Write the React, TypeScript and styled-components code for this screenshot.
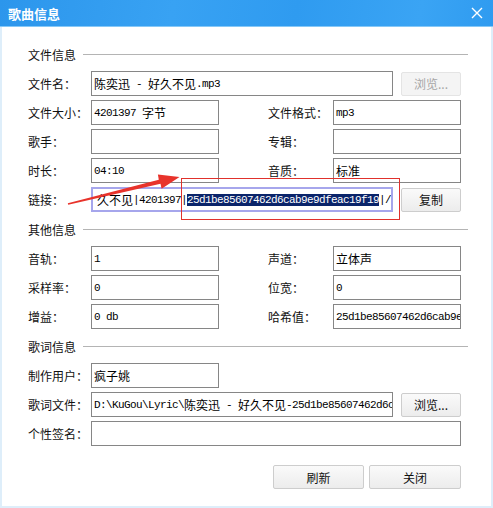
import React from 'react';
import styled, { createGlobalStyle } from 'styled-components';

const GlobalStyle = createGlobalStyle`
  html, body { margin: 0; padding: 0; background: #fff; }
  body { font-family: "Noto Sans CJK SC", "Noto Sans", sans-serif; font-size: 12px; }
`;

const HAN_RUNS = /[\u2e80-\uffff]+|[^\u2e80-\uffff]+/g;
const IS_HAN = /[\u2e80-\uffff]/;

// SimSun style text: han glyphs 12px wide, ascii 6px wide
const mixed = (text: string) =>
    (text.match(HAN_RUNS) || []).map((part, i) =>
        IS_HAN.test(part) ? <Han key={i}>{part}</Han> : <span key={i}>{part}</span>
    );

const WIDE = '63px 1fr 68px';

const App = () =>
    <>
        <GlobalStyle />
        <Window>
            <TitleBar>
                <Title>歌曲信息</Title>
                <svg width="12" height="12" viewBox="0 0 12 12">
                    <path d="M1 1 L11 11 M11 1 L1 11" stroke="#fff" strokeWidth="1.4" fill="none" />
                </svg>
            </TitleBar>
            <Body>
                <Header>文件信息</Header>
                <Rows>
                    <Row $cols={WIDE}>
                        <Label>文件名：</Label>
                        <Field>{mixed('陈奕迅 - 好久不见.mp3')}</Field>
                        <Button $disabled $width={60}>浏览...</Button>
                    </Row>
                    <Row>
                        <Label>文件大小：</Label>
                        <Field>{mixed('4201397 字节')}</Field>
                        <span />
                        <Label>文件格式：</Label>
                        <Field>mp3</Field>
                    </Row>
                    <Row>
                        <Label>歌手：</Label>
                        <Field />
                        <span />
                        <Label>专辑：</Label>
                        <Field />
                    </Row>
                    <Row>
                        <Label>时长：</Label>
                        <Field>04:10</Field>
                        <span />
                        <Label>音质：</Label>
                        <Field>{mixed('标准')}</Field>
                    </Row>
                    <Row $cols={WIDE}>
                        <Label>链接：</Label>
                        <Field $focus>
                            {mixed('久不见|4201397|')}
                            <Selected>25d1be85607462d6cab9e9dfeac19f19</Selected>
                            |/
                        </Field>
                        <Button $width={60}>复制</Button>
                    </Row>
                </Rows>

                <Header $gap>其他信息</Header>
                <Rows>
                    <Row>
                        <Label>音轨：</Label>
                        <Field>1</Field>
                        <span />
                        <Label>声道：</Label>
                        <Field>{mixed('立体声')}</Field>
                    </Row>
                    <Row>
                        <Label>采样率：</Label>
                        <Field>0</Field>
                        <span />
                        <Label>位宽：</Label>
                        <Field>0</Field>
                    </Row>
                    <Row>
                        <Label>增益：</Label>
                        <Field>0 db</Field>
                        <span />
                        <Label>哈希值：</Label>
                        <Field>25d1be85607462d6cab9e9dfeac19f19</Field>
                    </Row>
                </Rows>

                <Header $gap>歌词信息</Header>
                <Rows>
                    <Row>
                        <Label>制作用户：</Label>
                        <Field>{mixed('疯子姚')}</Field>
                    </Row>
                    <Row $cols={WIDE}>
                        <Label>歌词文件：</Label>
                        <Field>{mixed('D:\\KuGou\\Lyric\\陈奕迅 - 好久不见-25d1be85607462d6cab9e9dfeac19f19.krc')}</Field>
                        <Button $width={60}>浏览...</Button>
                    </Row>
                    <Row $cols="63px 1fr">
                        <Label>个性签名：</Label>
                        <Field />
                    </Row>
                </Rows>

                <Footer>
                    <Button $width={91}>刷新</Button>
                    <Button $width={92}>关闭</Button>
                </Footer>
            </Body>

            <Overlay width="493" height="508" viewBox="0 0 493 508">
                <rect x="181.5" y="178.5" width="218" height="41" fill="none" stroke="#e0312c" strokeWidth="1" />
                <polygon
                    fill="#e8332b"
                    points="67.8,203.3 158.8,179.8 157.9,174.6 179.5,177 161.6,188.8 160.5,183.8 68.2,204.8"
                />
            </Overlay>
        </Window>
    </>;

const Window = styled.div`
    position: relative;
    width: 493px;
    height: 508px;
    box-sizing: border-box;
    background: #fff;
    box-shadow: inset 2px 0 #deeefa, inset -2px 0 #deeefa, inset 0 -2px #deeefa;
    overflow: hidden;
    display: flex;
    flex-direction: column;
`;

const TitleBar = styled.div`
    height: 27px;
    box-sizing: border-box;
    flex-shrink: 0;
    display: flex;
    align-items: center;
    justify-content: space-between;
    padding: 0 10px 0 8px;
    background: linear-gradient(100deg, #2c96ec 0%, #38a2f3 35%, #2f9bf0 60%, #3aa4f4 85%, #2f9bf0 100%);
    border-bottom: 1px solid #86c8f7;
`;

const Title = styled.div`
    color: #fff;
    font-size: 13px;
    font-weight: bold;
    line-height: 1;
`;

const Body = styled.div`
    flex: 1;
    padding: 19px 32px 0 28px;
`;

const Header = styled.div<{ $gap?: boolean }>`
    height: 16px;
    margin: ${p => p.$gap ? '9px' : '0'} -7px 9px 0;
    display: flex;
    align-items: center;
    gap: 7px;
    color: #111;
    font-size: 12px;

    &::after {
        content: '';
        flex: 1;
        border-top: 1px solid #b4b4b4;
    }
`;

const Rows = styled.div`
    display: flex;
    flex-direction: column;
    gap: 4px;
`;

const Row = styled.div<{ $cols?: string }>`
    display: grid;
    grid-template-columns: ${p => p.$cols || '63px 128px 49px 65px 128px'};
    align-items: center;
    height: 25px;
`;

const Label = styled.div`
    font-size: 12px;
    color: #111;
    white-space: nowrap;
`;

const Field = styled.div<{ $focus?: boolean }>`
    height: 25px;
    box-sizing: border-box;
    display: flex;
    align-items: center;
    overflow: hidden;
    white-space: pre;
    background: #fff;
    border: ${p => p.$focus ? '2px solid #a6a6ec' : '1px solid #868686'};
    padding: 0 ${p => p.$focus ? '4px' : '2px'};
    font-family: "Liberation Mono", "DejaVu Sans Mono", monospace;
    font-size: 11px;
    letter-spacing: -0.6px;
    color: #000;
`;

const Han = styled.span`
    font-family: "Noto Sans CJK SC", sans-serif;
    font-size: 12px;
    letter-spacing: 0;
`;

const Selected = styled.span`
    background: #0a246a;
    color: #fff;
`;

const Button = styled.button<{ $disabled?: boolean; $width?: number }>`
    justify-self: end;
    height: 24px;
    width: ${p => p.$width ? `${p.$width}px` : 'auto'};
    padding: 0;
    box-sizing: border-box;
    border: 1px solid ${p => p.$disabled ? '#e4e4e4' : '#cdcdcd'};
    border-radius: 2px;
    background: ${p => p.$disabled ? '#f4f4f4' : 'linear-gradient(#fafafa, #ececec)'};
    color: ${p => p.$disabled ? '#a6a6a6' : '#111'};
    font-family: "Noto Sans CJK SC", sans-serif;
    font-size: 12px;
    white-space: pre;
`;

const Footer = styled.div`
    display: flex;
    justify-content: flex-end;
    gap: 5px;
    margin-top: 19px;
`;

const Overlay = styled.svg`
    position: absolute;
    left: 0;
    top: 0;
    pointer-events: none;
`;

export default App;
